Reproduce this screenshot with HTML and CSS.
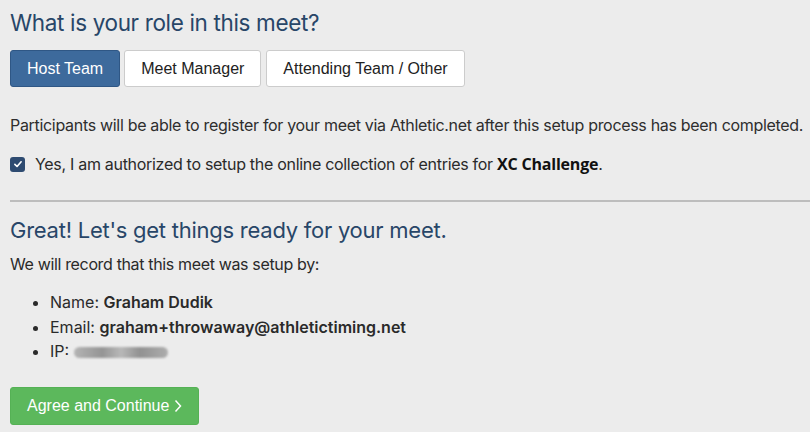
FILE: index.html
```html
<!DOCTYPE html>
<html>
<head>
<meta charset="utf-8">
<link rel="stylesheet" href="styles.css">
</head>
<body>
<main class="page">
  <h2 class="title">What is your role in this meet?</h2>
  <div class="roles">
    <button class="role active">Host Team</button>
    <button class="role">Meet Manager</button>
    <button class="role">Attending Team / Other</button>
  </div>
  <p class="info">Participants will be able to register for your meet via Athletic.net after this setup process has been completed.</p>
  <label class="auth">
    <span class="check"><svg viewBox="0 0 16 16" width="10" height="10"><path d="M3 8.5 L6.5 12 L13 4.5" fill="none" stroke="#fff" stroke-width="2.6" stroke-linecap="round" stroke-linejoin="round"/></svg></span>
    <span>Yes, I am authorized to setup the online collection of entries for <b class="meet">XC Challenge</b>.</span>
  </label>
  <hr class="rule">
  <h3 class="subtitle">Great! Let's get things ready for your meet.</h3>
  <p class="record">We will record that this meet was setup by:</p>
  <ul class="details">
    <li>Name: <b>Graham Dudik</b></li>
    <li>Email: <b>graham+throwaway@athletictiming.net</b></li>
    <li>IP: <span class="blur"></span></li>
  </ul>
  <button class="agree">Agree and Continue <svg viewBox="0 0 8 14" width="8" height="14"><path d="M1.5 1.5 L6.5 7 L1.5 12.5" fill="none" stroke="#fff" stroke-width="1.5"/></svg></button>
</main>
</body>
</html>
```
FILE: styles.css
```css
html, body { margin: 0; padding: 0; background: #ececec; }
body { font-family: Inter, "Noto Sans", sans-serif; color: #2a2a2a; }
.page { padding: 7px 10px 0 10px; }
.title { margin: 0; font-size: 22.5px; font-weight: 400; color: #284668; line-height: 32px; letter-spacing: -0.35px; }
.roles { display: flex; gap: 4px; margin-top: 11px; }
.role { font-family: "Liberation Sans", Arial, sans-serif; font-size: 16px; height: 37px; padding: 0 16px; background: #fff; border: 1px solid #ccc; border-radius: 3px; color: #222; }
.role + .role + .role { margin-left: 1px; }
.role.active { background: #3d6a9c; border-color: #2f5785; color: #fff; }
.info { margin: 26px 0 0 0; font-size: 16px; line-height: 24px; color: #2e2e2e; letter-spacing: -0.31px; white-space: nowrap; }
.auth { display: flex; align-items: center; gap: 10px; margin-top: 15px; font-size: 16px; line-height: 24px; letter-spacing: -0.3px; }
.check { width: 15px; height: 15px; border-radius: 3px; background: #2e4b71; display: flex; align-items: center; justify-content: center; flex: none; }
.meet { font-family: "Open Sans", sans-serif; font-weight: 700; color: #111; letter-spacing: -0.2px; }
.rule { margin: 24px -10px 0 0; border: 0; border-top: 2px solid #bdbdbd; }
.subtitle { margin: 12px 0 0 0; font-size: 22px; font-weight: 400; color: #284668; line-height: 32px; letter-spacing: -0.25px; }
.record { margin: 6px 0 0 0; font-size: 16px; line-height: 24px; letter-spacing: -0.35px; }
.details { margin: 14px 0 0 0; padding-left: 40px; font-size: 16px; line-height: 24.5px; }
.details b { font-weight: 600; }
.blur { display: inline-block; width: 94px; height: 11px; vertical-align: -1px; border-radius: 6px; background: linear-gradient(90deg, #b4b4b4, #959595 30%, #b8b8b8 50%, #929292 70%, #adadad); filter: blur(1.2px); }
.agree { margin-top: 23px; font-family: "Liberation Sans", Arial, sans-serif; font-size: 16px; height: 38px; padding: 0 16px; background: #5cb85c; border: 1px solid #55b155; border-radius: 3px; color: #fff; display: inline-flex; align-items: center; gap: 5px; }
```
